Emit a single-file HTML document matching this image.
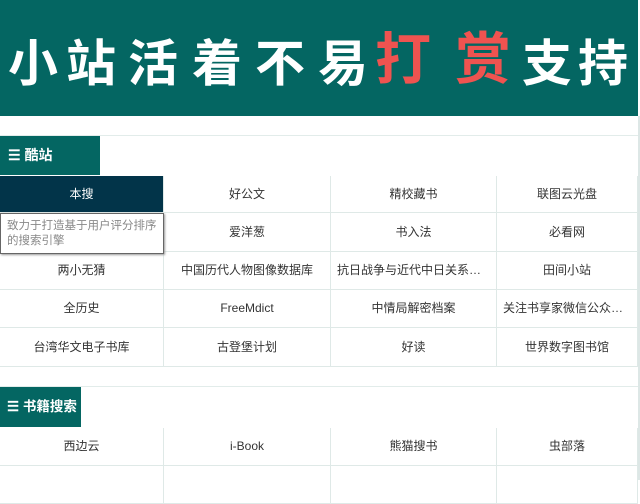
<!DOCTYPE html>
<html><head><meta charset="utf-8"><style>
*{margin:0;padding:0;box-sizing:border-box}
body{width:640px;height:480px;overflow:hidden;background:#fff;font-family:"Liberation Sans","Noto Sans CJK SC",sans-serif;position:relative}
.banner{position:absolute;left:0;top:0;width:638px;height:116px;background:#046662;overflow:hidden}
.banner b{position:absolute;top:28px;font-family:"WenQuanYi Zen Hei","Noto Sans CJK SC",sans-serif;font-weight:bold;font-size:50px;color:#fff;line-height:64px}
.banner b.r{color:#ef5350;font-size:56px;top:24px}
.rb{position:absolute;right:0;top:116px;width:2px;height:364px;background:#dde7e6}
.hl{position:absolute;left:0;width:638px;height:1px;background:#e2ecea}
.hd{position:absolute;left:0;background:#046662;color:#fff;font-weight:bold;font-size:14px;padding-left:8px;line-height:39px;white-space:nowrap;overflow:hidden;font-family:"Liberation Sans","Noto Sans CJK SC",sans-serif}
.c{position:absolute;border-right:1px solid #dfe9e7;border-bottom:1px solid #dfe9e7;font-size:12px;color:#333;text-align:center;white-space:nowrap;overflow:hidden;text-overflow:ellipsis}
.act{background:#023449;color:#fff}
.tip{position:absolute;left:0;top:213px;width:164px;height:41px;background:#fff;border:1px solid #666;box-shadow:1px 1px 2px #999;font-size:11.5px;color:#888;line-height:15px;padding:5px 0 0 6px}
</style></head><body>
<div class="banner">
<b style="left:8px">小</b><b style="left:66px">站</b><b style="left:128px">活</b><b style="left:192px">着</b><b style="left:255px">不</b><b style="left:318px">易</b><b class="r" style="left:375px">打</b><b class="r" style="left:455px">赏</b><b style="left:522px">支</b><b style="left:578px">持</b>
</div>
<div class="rb"></div>
<div class="hl" style="top:135px"></div>
<div class="hd" style="top:136px;width:100px;height:39px">☰ 酷站</div>
<div class="hl" style="top:386px"></div>
<div class="hd" style="top:387px;width:81px;height:40px;font-size:13.5px;padding-left:7px">☰ 书籍搜索</div>
<script>
var cols=[0,164,331,497,638];
function grid(rows,items,actIdx){
  var k=0;
  for(var r=0;r<rows.length-1;r++){
    for(var c=0;c<4;c++){
      var d=document.createElement('div');d.className='c'+(k===actIdx?' act':'');
      d.style.left=cols[c]+'px';d.style.top=rows[r]+'px';
      d.style.width=(cols[c+1]-cols[c])+'px';d.style.height=(rows[r+1]-rows[r])+'px';
      d.style.lineHeight=(rows[r+1]-rows[r]-1)+'px';
      d.style.padding='0 6px';
      d.textContent=items[k]||'';
      document.body.appendChild(d);k++;
    }
  }
}
grid([176,213,252,290,328,367],["本搜","好公文","精校藏书","联图云光盘","","爱洋葱","书入法","必看网","两小无猜","中国历代人物图像数据库","抗日战争与近代中日关系文献数据平台","田间小站","全历史","FreeMdict","中情局解密档案","关注书享家微信公众号，获取更多","台湾华文电子书库","古登堡计划","好读","世界数字图书馆"],0);
grid([428,466,504],["西边云","i-Book","熊猫搜书","虫部落","","","",""],-1);
var t=document.createElement('div');t.className='tip';t.textContent='致力于打造基于用户评分排序的搜索引擎';document.body.appendChild(t);
</script>
</body></html>
